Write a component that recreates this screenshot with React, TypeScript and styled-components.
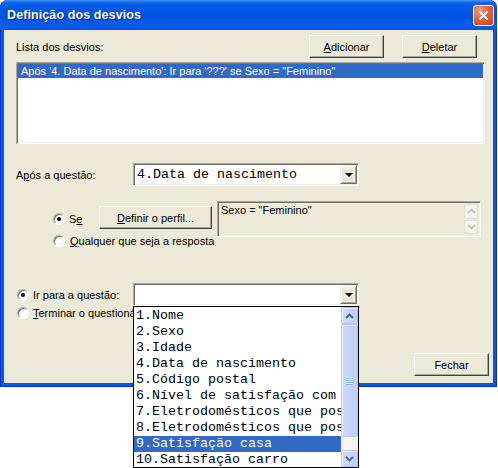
import React from 'react'
import styled, { createGlobalStyle } from 'styled-components'

const GlobalStyle = createGlobalStyle`
  html, body {
    margin: 0;
    padding: 0;
    background: #fff;
  }
  body {
    font-family: 'Liberation Sans', Arial, sans-serif;
    font-size: 11px;
    color: #000;
  }
  * { box-sizing: border-box; }
`

const Screen = styled.div`
  position: relative;
  width: 498px;
  height: 468px;
  overflow: hidden;
`

const Window = styled.div`
  width: 497px;
  height: 387px;
  display: flex;
  flex-direction: column;
  background: #0858e6;
  border-radius: 8px 8px 0 0;
  box-shadow: inset 1px 0 #0831d9, inset -1px 0 #0030b8, inset 0 -1px #0030b8;
`

const TitleBar = styled.div`
  height: 30px;
  flex: none;
  display: flex;
  align-items: center;
  justify-content: space-between;
  padding: 0 3px 0 7px;
  border-radius: 8px 8px 0 0;
  background: linear-gradient(
    #3f97ff 0,
    #0d62ec 3px,
    #0057e6 9px,
    #0053e2 18px,
    #0560f0 26px,
    #0150da 30px
  );
`

const Title = styled.span`
  color: #fff;
  font-weight: bold;
  font-size: 12.5px;
  letter-spacing: 0.1px;
  text-shadow: 1px 1px #0b2078;
`

const CloseButton = styled.div`
  width: 21px;
  height: 21px;
  border: 1px solid #fff;
  border-radius: 3px;
  display: flex;
  align-items: center;
  justify-content: center;
  background: radial-gradient(circle at 30% 25%, #f09a7d 0, #e1643f 45%, #c8401b 100%);
`

const Frame = styled.div`
  flex: 1;
  margin: 0 4px 4px;
  background: #ece9d8;
  display: flex;
  flex-direction: column;
  padding-left: 12px;
  overflow: hidden;
`

const HeaderRow = styled.div`
  display: flex;
  align-items: center;
  height: 23px;
  margin-top: 5px;
  padding-right: 16px;
`

const Label = styled.span<{ $w?: number }>`
  flex: ${p => (p.$w ? 'none' : '1')};
  width: ${p => (p.$w ? `${p.$w}px` : 'auto')};
  white-space: nowrap;
`

const ButtonGroup = styled.div`
  display: flex;
  gap: 18px;
`

const Button = styled.div<{ $w?: number; $top?: number }>`
  width: ${p => p.$w ?? 75}px;
  height: 23px;
  margin-top: ${p => p.$top ?? 0}px;
  flex: none;
  display: flex;
  align-items: center;
  justify-content: center;
  background: #ece9d8;
  border: 1px solid;
  border-color: #fff #404040 #404040 #fff;
  box-shadow: inset -1px -1px #aca899;
  white-space: nowrap;
`

const ListBox = styled.div`
  height: 82px;
  margin: 4px 8px 0 0;
  background: #fff;
  border: 1px solid;
  border-color: #aca899 #fff #fff #aca899;
  box-shadow: inset 1px 1px #716f64, inset -1px -1px #f1efe2;
  padding: 1px 1px;
`

const ListRow = styled.div<{ $selected?: boolean }>`
  height: 14px;
  line-height: 14px;
  padding-left: 3px;
  white-space: nowrap;
  overflow: hidden;
  background: ${p => (p.$selected ? '#316ac5' : 'transparent')};
  color: ${p => (p.$selected ? '#fff' : '#000')};
`

const FieldRow = styled.div<{ $top: number; $h: number; $indent?: number; $align?: string }>`
  display: flex;
  align-items: ${p => p.$align ?? 'center'};
  margin-top: ${p => p.$top}px;
  height: ${p => p.$h}px;
  padding-left: ${p => p.$indent ?? 0}px;
  flex: none;
`

const Combo = styled.div`
  width: 226px;
  height: 23px;
  flex: none;
  display: flex;
  align-items: center;
  background: #fff;
  border: 1px solid;
  border-color: #aca899 #fff #fff #aca899;
  box-shadow: inset 1px 1px #716f64, inset -1px -1px #f1efe2;
  padding: 1px;
`

const MonoText = styled.span`
  flex: 1;
  padding-left: 2px;
  font-family: 'Liberation Mono', 'Courier New', monospace;
  font-size: 13.33px;
  white-space: nowrap;
  overflow: hidden;
`

const DropButton = styled.div`
  width: 17px;
  height: 19px;
  flex: none;
  display: flex;
  align-items: center;
  justify-content: center;
  background: #ece9d8;
  border: 1px solid;
  border-color: #f1efe2 #716f64 #716f64 #f1efe2;
  box-shadow: inset 1px 1px #fff, inset -1px -1px #aca899;

  &::after {
    content: '';
    border-left: 4px solid transparent;
    border-right: 4px solid transparent;
    border-top: 4px solid #000;
  }
`

const RadioOption = styled.div<{ $w?: number; $top?: number; $gap?: number; $clip?: boolean }>`
  display: flex;
  align-items: center;
  gap: ${p => p.$gap ?? 5}px;
  width: ${p => (p.$w ? `${p.$w}px` : 'auto')};
  margin-top: ${p => p.$top ?? 0}px;
  flex: none;
  white-space: nowrap;
  overflow: ${p => (p.$clip ? 'hidden' : 'visible')};
`

const Radio = styled.span<{ $checked?: boolean }>`
  position: relative;
  width: 12px;
  height: 12px;
  flex: none;
  border-radius: 50%;
  background: #fff;
  border: 1px solid;
  border-color: #aca899 #fff #fff #aca899;
  box-shadow: inset 1px 1px #716f64, inset -1px -1px #f1efe2;

  &::after {
    content: '';
    display: ${p => (p.$checked ? 'block' : 'none')};
    position: absolute;
    left: 3px;
    top: 3px;
    width: 4px;
    height: 4px;
    border-radius: 50%;
    background: #000;
  }
`

const ReadOnlyBox = styled.div`
  width: 264px;
  height: 36px;
  margin-left: 5px;
  flex: none;
  display: flex;
  background: #ece9d8;
  border: 1px solid;
  border-color: #aca899 #fff #fff #aca899;
  box-shadow: inset 1px 1px #716f64, inset -1px -1px #f1efe2;
  padding: 2px 2px 2px 3px;
`

const ReadOnlyText = styled.span`
  flex: 1;
  line-height: 13px;
`

const DisabledArrows = styled.div`
  width: 14px;
  display: flex;
  flex-direction: column;
  gap: 1px;
`

const DisabledArrow = styled.div`
  flex: 1;
  display: flex;
  align-items: center;
  justify-content: center;
  background: #f3f2ec;
  border: 1px solid #e2dfd2;
  border-radius: 2px;
`

const Footer = styled.div`
  display: flex;
  justify-content: flex-end;
  margin-top: 33px;
  padding-right: 4px;
`

const DropList = styled.div`
  position: absolute;
  left: 133px;
  top: 306px;
  width: 226px;
  height: 162px;
  border: 1px solid #000;
  background: #fff;
  display: flex;
`

const DropItems = styled.div`
  flex: 1;
  min-width: 0;
  padding-top: 1px;
`

const DropItem = styled.div<{ $selected?: boolean }>`
  height: 16px;
  line-height: 16px;
  padding-left: 2px;
  font-family: 'Liberation Mono', 'Courier New', monospace;
  font-size: 13.33px;
  white-space: nowrap;
  overflow: hidden;
  background: ${p => (p.$selected ? '#316ac5' : 'transparent')};
  color: ${p => (p.$selected ? '#fff' : '#000')};
`

const ScrollBar = styled.div`
  width: 17px;
  flex: none;
  display: flex;
  flex-direction: column;
  background: #f4f3ee;
`

const ScrollPart = styled.div<{ $h: number }>`
  height: ${p => p.$h}px;
  flex: none;
  display: flex;
  align-items: center;
  justify-content: center;
  background: linear-gradient(90deg, #cddbfc, #bcd0f8);
  border: 1px solid #b3c7f3;
  border-radius: 2px;
  box-shadow: inset 1px 1px #e8effe;
`

const Grip = styled.span`
  width: 7px;
  height: 8px;
  background: repeating-linear-gradient(#eef4fe 0 1px, #8cb0f8 1px 2px);
`

const Spacer = styled.div`
  flex: 1;
`

const Chevron = ({ up, color = '#4d6185' }: { up?: boolean; color?: string }) => (
  <svg width="9" height="6" viewBox="0 0 9 6">
    <path
      d={up ? 'M1 5 L4.5 1.5 L8 5' : 'M1 1 L4.5 4.5 L8 1'}
      fill="none"
      stroke={color}
      strokeWidth="1.8"
    />
  </svg>
)

const questions = [
  '1.Nome',
  '2.Sexo',
  '3.Idade',
  '4.Data de nascimento',
  '5.Código postal',
  '6.Nível de satisfação com',
  '7.Eletrodomésticos que possui',
  '8.Eletrodomésticos que possui',
  '9.Satisfação casa',
  '10.Satisfação carro',
]

const App: React.FC = () => {
  return (
    <Screen>
      <GlobalStyle />
      <Window>
        <TitleBar>
          <Title>Definição dos desvios</Title>
          <CloseButton>
            <svg width="11" height="11" viewBox="0 0 11 11">
              <path d="M1.5 1.5 L9.5 9.5 M9.5 1.5 L1.5 9.5" stroke="#fff" strokeWidth="2" />
            </svg>
          </CloseButton>
        </TitleBar>
        <Frame>
          <HeaderRow>
            <Label>Lista dos desvios:</Label>
            <ButtonGroup>
              <Button><u>A</u>dicionar</Button>
              <Button><u>D</u>eletar</Button>
            </ButtonGroup>
          </HeaderRow>
          <ListBox>
            <ListRow $selected>
              Após '4. Data de nascimento': Ir para '???' se Sexo = "Feminino"
            </ListRow>
          </ListBox>

          <FieldRow $top={19} $h={23}>
            <Label $w={117}>A<u>p</u>ós a questão:</Label>
            <Combo>
              <MonoText>4.Data de nascimento</MonoText>
              <DropButton />
            </Combo>
          </FieldRow>

          <FieldRow $top={15} $h={36} $indent={37} $align="flex-start">
            <RadioOption $w={46} $top={12} $gap={4}>
              <Radio $checked />
              <span>S<u>e</u></span>
            </RadioOption>
            <Button $w={113} $top={5}>
              <span><u>D</u>efinir o perfil...</span>
            </Button>
            <ReadOnlyBox>
              <ReadOnlyText>Sexo = "Feminino"</ReadOnlyText>
              <DisabledArrows>
                <DisabledArrow><Chevron up color="#c6c4b8" /></DisabledArrow>
                <DisabledArrow><Chevron color="#c6c4b8" /></DisabledArrow>
              </DisabledArrows>
            </ReadOnlyBox>
          </FieldRow>

          <FieldRow $top={-3} $h={14} $indent={37}>
            <RadioOption>
              <Radio />
              <span><u>Q</u>ualquer que seja a resposta</span>
            </RadioOption>
          </FieldRow>

          <FieldRow $top={35} $h={23} $indent={1}>
            <RadioOption $w={116} $gap={4}>
              <Radio $checked />
              <span>Ir para a questão:</span>
            </RadioOption>
            <Combo>
              <MonoText />
              <DropButton />
            </Combo>
          </FieldRow>

          <FieldRow $top={0} $h={14} $indent={1}>
            <RadioOption $w={116} $gap={4} $clip>
              <Radio />
              <span><u>T</u>erminar o questionário</span>
            </RadioOption>
          </FieldRow>

          <Footer>
            <Button>Fechar</Button>
          </Footer>
        </Frame>
      </Window>

      <DropList>
        <DropItems>
          {questions.map((q, i) => (
            <DropItem key={q + i} $selected={i === 8}>{q}</DropItem>
          ))}
        </DropItems>
        <ScrollBar>
          <ScrollPart $h={17}><Chevron up /></ScrollPart>
          <ScrollPart $h={113}><Grip /></ScrollPart>
          <Spacer />
          <ScrollPart $h={17}><Chevron /></ScrollPart>
        </ScrollBar>
      </DropList>
    </Screen>
  )
}

export default App
